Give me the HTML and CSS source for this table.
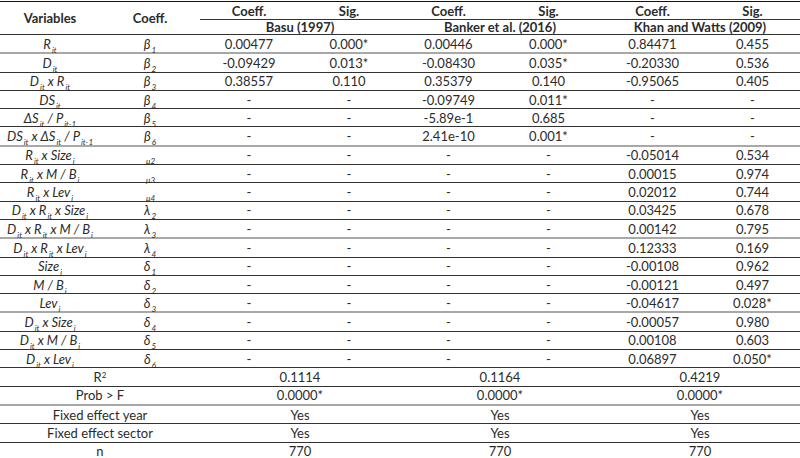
FILE: index.html
```html
<!DOCTYPE html>
<html>
<head>
<meta charset="utf-8">
<link rel="stylesheet" href="styles.css">
</head>
<body>
<table class="results">
  <colgroup>
    <col class="c-var"><col class="c-par">
    <col class="c-b1"><col class="c-b2">
    <col class="c-k1"><col class="c-k2">
    <col class="c-w1"><col class="c-w2">
  </colgroup>
  <thead>
    <tr class="h1">
      <th rowspan="2" class="hv">Variables</th>
      <th rowspan="2" class="hv">Coeff.</th>
      <th class="hl">Coeff.</th><th class="hl">Sig.</th>
      <th class="hl">Coeff.</th><th class="hl">Sig.</th>
      <th class="hl">Coeff.</th><th class="hl">Sig.</th>
    </tr>
    <tr class="h2">
      <th colspan="2">Basu (1997)</th>
      <th colspan="2">Banker et al. (2016)</th>
      <th colspan="2">Khan and Watts (2009)</th>
    </tr>
  </thead>
  <tbody>
    <tr class="g"><td class="v">R<sub>it</sub></td><td class="v">β<sub>1</sub></td><td>0.00477</td><td>0.000*</td><td>0.00446</td><td>0.000*</td><td>0.84471</td><td>0.455</td></tr>
    <tr><td class="v">D<sub>it</sub></td><td class="v">β<sub>2</sub></td><td>-0.09429</td><td>0.013*</td><td>-0.08430</td><td>0.035*</td><td>-0.20330</td><td>0.536</td></tr>
    <tr><td class="v">D<sub>it</sub> x R<sub>it</sub></td><td class="v">β<sub>3</sub></td><td>0.38557</td><td>0.110</td><td>0.35379</td><td>0.140</td><td>-0.95065</td><td>0.405</td></tr>
    <tr><td class="v">DS<sub>it</sub></td><td class="v">β<sub>4</sub></td><td>-</td><td>-</td><td>-0.09749</td><td>0.011*</td><td>-</td><td>-</td></tr>
    <tr><td class="v">ΔS<sub>it</sub> / P<sub>it-1</sub></td><td class="v">β<sub>5</sub></td><td>-</td><td>-</td><td>-5.89e-1</td><td>0.685</td><td>-</td><td>-</td></tr>
    <tr class="g"><td class="v">DS<sub>it</sub> x ΔS<sub>it</sub> / P<sub>it-1</sub></td><td class="v">β<sub>6</sub></td><td>-</td><td>-</td><td>2.41e-10</td><td>0.001*</td><td>-</td><td>-</td></tr>
    <tr><td class="v">R<sub>it</sub> x Size<sub>i</sub></td><td class="v"><sub>μ2</sub></td><td>-</td><td>-</td><td>-</td><td>-</td><td>-0.05014</td><td>0.534</td></tr>
    <tr><td class="v">R<sub>it</sub> x M / B<sub>i</sub></td><td class="v"><sub>μ3</sub></td><td>-</td><td>-</td><td>-</td><td>-</td><td>0.00015</td><td>0.974</td></tr>
    <tr><td class="v">R<sub>it</sub> x Lev<sub>i</sub></td><td class="v"><sub>μ4</sub></td><td>-</td><td>-</td><td>-</td><td>-</td><td>0.02012</td><td>0.744</td></tr>
    <tr><td class="v">D<sub>it</sub> x R<sub>it</sub> x Size<sub>i</sub></td><td class="v">λ<sub>2</sub></td><td>-</td><td>-</td><td>-</td><td>-</td><td>0.03425</td><td>0.678</td></tr>
    <tr class="g"><td class="v">D<sub>it</sub> x R<sub>it</sub> x M / B<sub>i</sub></td><td class="v">λ<sub>3</sub></td><td>-</td><td>-</td><td>-</td><td>-</td><td>0.00142</td><td>0.795</td></tr>
    <tr><td class="v">D<sub>it</sub> x R<sub>it</sub> x Lev<sub>i</sub></td><td class="v">λ<sub>4</sub></td><td>-</td><td>-</td><td>-</td><td>-</td><td>0.12333</td><td>0.169</td></tr>
    <tr><td class="v">Size<sub>i</sub></td><td class="v">δ<sub>1</sub></td><td>-</td><td>-</td><td>-</td><td>-</td><td>-0.00108</td><td>0.962</td></tr>
    <tr><td class="v">M / B<sub>i</sub></td><td class="v">δ<sub>2</sub></td><td>-</td><td>-</td><td>-</td><td>-</td><td>-0.00121</td><td>0.497</td></tr>
    <tr class="g"><td class="v">Lev<sub>i</sub></td><td class="v">δ<sub>3</sub></td><td>-</td><td>-</td><td>-</td><td>-</td><td>-0.04617</td><td>0.028*</td></tr>
    <tr><td class="v">D<sub>it</sub> x Size<sub>i</sub></td><td class="v">δ<sub>4</sub></td><td>-</td><td>-</td><td>-</td><td>-</td><td>-0.00057</td><td>0.980</td></tr>
    <tr><td class="v">D<sub>it</sub> x M / B<sub>i</sub></td><td class="v">δ<sub>5</sub></td><td>-</td><td>-</td><td>-</td><td>-</td><td>0.00108</td><td>0.603</td></tr>
    <tr><td class="v">D<sub>it</sub> x Lev<sub>i</sub></td><td class="v">δ<sub>6</sub></td><td>-</td><td>-</td><td>-</td><td>-</td><td>0.06897</td><td>0.050*</td></tr>
    <tr><td colspan="2">R<sup>2</sup></td><td colspan="2">0.1114</td><td colspan="2">0.1164</td><td colspan="2">0.4219</td></tr>
    <tr class="g"><td colspan="2">Prob &gt; F</td><td colspan="2">0.0000*</td><td colspan="2">0.0000*</td><td colspan="2">0.0000*</td></tr>
    <tr><td colspan="2">Fixed effect year</td><td colspan="2">Yes</td><td colspan="2">Yes</td><td colspan="2">Yes</td></tr>
    <tr><td colspan="2">Fixed effect sector</td><td colspan="2">Yes</td><td colspan="2">Yes</td><td colspan="2">Yes</td></tr>
    <tr class="last"><td colspan="2">n</td><td colspan="2">770</td><td colspan="2">770</td><td colspan="2">770</td></tr>
  </tbody>
</table>
</body>
</html>
```
FILE: styles.css
```css
html, body {
  margin: 0;
  padding: 0;
  background: #ffffff;
}
body {
  padding-top: 1px;
  font-family: Lato, "Open Sans", sans-serif;
  font-size: 13px;
  color: #2b2b2b;
}
.results {
  width: 800px;
  border-collapse: collapse;
  table-layout: fixed;
  border-top: 1px solid #111;
}
.c-var { width: 100px; }
.c-par { width: 100px; }
.c-b1 { width: 98px; }
.c-b2 { width: 102px; }
.c-k1 { width: 97px; }
.c-k2 { width: 103px; }
.c-w1 { width: 105px; }
.c-w2 { width: 95px; }

.results th {
  font-weight: 700;
  padding: 0;
  text-align: center;
  line-height: 14px;
}
.h1 th { height: 17px; vertical-align: middle; }
.h1 th.hl { border-bottom: 1px solid #333; }
.h2 th { height: 14px; vertical-align: middle; }
.results thead { border-bottom: 1px solid #333; }

.results td {
  padding: 0;
  height: 17.3px;
  text-align: center;
  vertical-align: middle;
  line-height: 14px;
  white-space: nowrap;
}
.results tbody tr { border-bottom: 1px solid #333; }
.results tbody tr.g { border-bottom: 2px solid #a8a8a8; }
.results tbody tr.last { border-bottom: 2px solid #444; }

.v { font-style: italic; }
.v sub {
  font-size: 8px;
  line-height: 0;
  vertical-align: -4px;
  margin-left: 1px;
}
sup {
  font-size: 8px;
  line-height: 0;
  vertical-align: 4px;
}
```
